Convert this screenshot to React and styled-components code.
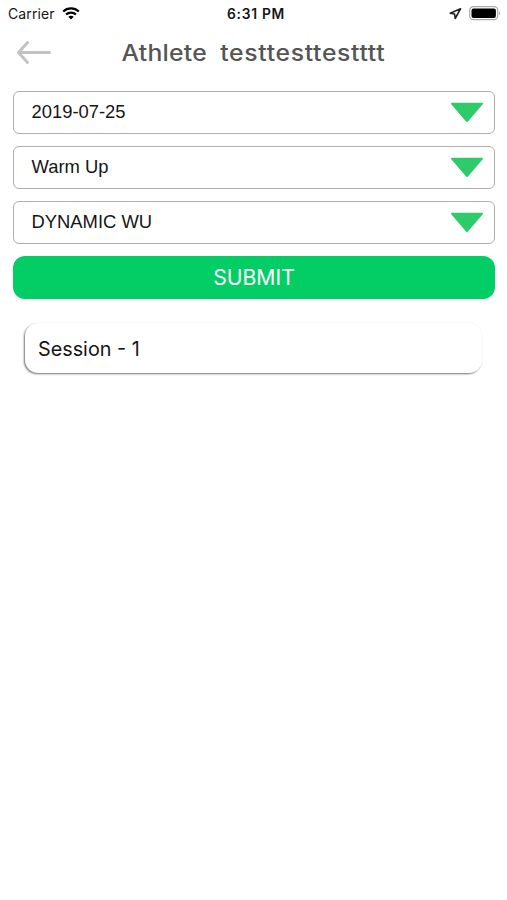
import React from "react";
import styled, { createGlobalStyle } from "styled-components";

const GlobalStyle = createGlobalStyle`
  * {
    box-sizing: border-box;
  }

  body {
    margin: 0;
    background: #fff;
    font-family: Inter, sans-serif;
    color: #151515;
  }
`;

const Screen = styled.main`
  width: 100%;
  min-height: 900px;
  background: #fff;
`;

const StatusBar = styled.div`
  display: grid;
  grid-template-columns: 1fr auto 1fr;
  align-items: center;
  height: 27px;
  padding: 0 6px 0 8px;
`;

const StatusGroup = styled.div`
  display: flex;
  align-items: center;
  justify-content: ${(props) => (props.$end ? "flex-end" : "flex-start")};
  gap: 7px;
`;

const Carrier = styled.span`
  font-size: 14px;
  line-height: 27px;
  letter-spacing: 0.1px;
`;

const Time = styled.span`
  padding: 1px 0 0 3px;
  font-size: 13.8px;
  font-weight: 600;
  line-height: 26px;
  letter-spacing: 0.7px;
`;

const Header = styled.header`
  display: grid;
  grid-template-columns: 52px 1fr 52px;
  align-items: center;
  height: 50px;
`;

const BackButton = styled.button`
  display: flex;
  padding: 0 0 0 16px;
  border: 0;
  background: none;
`;

const Title = styled.h1`
  display: flex;
  justify-content: center;
  gap: 12px;
  margin: 0;
  padding-top: 1px;
  font-size: 22.5px;
  font-weight: 500;
  line-height: 50px;
  color: #555;
  transform: scaleX(1.1);
`;

const TitleWord = styled.span`
  letter-spacing: ${(props) => (props.$wide ? "0.6px" : "0.2px")};
`;

const Form = styled.form`
  display: flex;
  flex-direction: column;
  gap: 12px;
  padding: 14px 12px 0 13px;
`;

const Select = styled.div`
  display: flex;
  align-items: center;
  justify-content: space-between;
  height: 43px;
  padding: 0 10px 0 17px;
  border: 1.5px solid #aeaeae;
  border-radius: 6px;
`;

const SelectText = styled.span`
  padding: 0 0 2px 0.5px;
  font-family: "Liberation Sans", Arial, sans-serif;
  font-size: 18.4px;
`;

const Submit = styled.button`
  height: 43px;
  padding: 0;
  border: 0;
  border-radius: 12px;
  background: #03ce66;
  color: #fff;
  font-family: Inter, sans-serif;
  font-size: 21.2px;
  line-height: 43px;
`;

const SessionCard = styled.section`
  display: flex;
  align-items: center;
  height: 50px;
  margin: 24px 25px 0;
  padding: 2px 13px 0;
  border-radius: 13px;
  background: #fff;
  box-shadow: -1px 1px 2px rgba(0, 0, 0, 0.55);
  font-size: 19.8px;
`;

const WifiIcon = () => (
  <svg width="18" height="13" viewBox="0 0 18 13" fill="none" stroke="#000" strokeWidth="2.2">
    <path d="M1.2 4.5C5.5 .4 12.5 .4 16.8 4.5" />
    <path d="M4 7.5C6.8 4.9 11.2 4.9 14 7.5" />
    <path d="M6.3 9.8C7.8 8.4 10.2 8.4 11.7 9.8L9 12.5Z" fill="#000" stroke="none" />
  </svg>
);

const LocationIcon = () => (
  <svg width="13" height="13" viewBox="0 0 13 13" fill="none" stroke="#222" strokeWidth="1.6" strokeLinejoin="round">
    <path d="M11.5 1.8L1.2 6.2L5.6 7L6.2 11.5Z" />
  </svg>
);

const BatteryIcon = () => (
  <svg width="32" height="15" viewBox="0 0 32 15">
    <rect x="0.7" y="0.7" width="28" height="13" rx="3.6" fill="#fff" stroke="#aaa" strokeWidth="1.2" />
    <rect x="2.5" y="2.5" width="24.4" height="9.4" rx="2" fill="#000" />
    <path d="M30 5.2Q32 7.2 30 9.3Z" fill="#999" />
  </svg>
);

const BackIcon = () => (
  <svg width="36" height="24" viewBox="0 0 36 24" fill="none" stroke="#c0c2c3" strokeWidth="2.8" strokeLinecap="round" strokeLinejoin="round">
    <path d="M33.5 11.5H2.5M11.5 1.5L2.5 11.5L11.5 21.5" />
  </svg>
);

const ArrowDown = () => (
  <svg width="34" height="21" viewBox="0 0 34 21" fill="#2dcb6a" stroke="#2dcb6a" strokeWidth="2" strokeLinejoin="round">
    <path d="M2 1.7H32L17 19Z" />
  </svg>
);

const fields = ["2019-07-25", "Warm Up", "DYNAMIC WU"];

const App = () => {
  return (
    <>
      <GlobalStyle />
      <Screen>
        <StatusBar>
          <StatusGroup>
            <Carrier>Carrier</Carrier>
            <WifiIcon />
          </StatusGroup>
          <Time>6:31 PM</Time>
          <StatusGroup $end>
            <LocationIcon />
            <BatteryIcon />
          </StatusGroup>
        </StatusBar>

        <Header>
          <BackButton type="button" aria-label="Back">
            <BackIcon />
          </BackButton>
          <Title>
            <TitleWord>Athlete</TitleWord>
            <TitleWord $wide>testtesttestttt</TitleWord>
          </Title>
        </Header>

        <Form onSubmit={(e) => e.preventDefault()}>
          {fields.map((field) => (
            <Select key={field}>
              <SelectText>{field}</SelectText>
              <ArrowDown />
            </Select>
          ))}
          <Submit type="submit">SUBMIT</Submit>
        </Form>

        <SessionCard>Session - 1</SessionCard>
      </Screen>
    </>
  );
};

export default App;
